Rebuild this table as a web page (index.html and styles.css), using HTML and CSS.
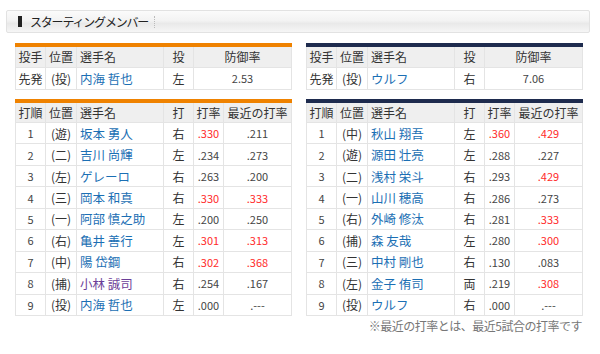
FILE: index.html
```html
<!DOCTYPE html>
<html lang="ja">
<head>
<meta charset="utf-8">
<link rel="stylesheet" href="styles.css">
</head>
<body>
<div class="page">
  <div class="title"><span class="title-mark"></span><span class="title-text">スターティングメンバー</span><span class="title-sep"></span></div>

  <div class="pair pitch">
    <table class="tbl home">
      <colgroup><col class="c1"><col class="c2"><col class="c3"><col class="c4"><col class="c5w"></colgroup>
      <tr class="head"><th>投手</th><th>位置</th><th class="l">選手名</th><th>投</th><th>防御率</th></tr>
      <tr><td>先発</td><td>(投)</td><td class="l"><span class="nm">内海 哲也</span></td><td>左</td><td class="n">2.53</td></tr>
    </table>
    <table class="tbl away">
      <colgroup><col class="c1"><col class="c2"><col class="c3"><col class="c4"><col class="c5w"></colgroup>
      <tr class="head"><th>投手</th><th>位置</th><th class="l">選手名</th><th>投</th><th>防御率</th></tr>
      <tr><td>先発</td><td>(投)</td><td class="l"><span class="nm">ウルフ</span></td><td>右</td><td class="n">7.06</td></tr>
    </table>
  </div>

  <div class="pair bat">
    <table class="tbl home">
      <colgroup><col class="c1"><col class="c2"><col class="c3"><col class="c4"><col class="c5"><col class="c6"></colgroup>
      <tr class="head"><th>打順</th><th>位置</th><th class="l">選手名</th><th>打</th><th>打率</th><th>最近の打率</th></tr>
      <tr><td class="n">1</td><td>(遊)</td><td class="l"><span class="nm">坂本 勇人</span></td><td>右</td><td class="n red">.330</td><td class="n">.211</td></tr>
      <tr><td class="n">2</td><td>(二)</td><td class="l"><span class="nm">吉川 尚輝</span></td><td>左</td><td class="n">.234</td><td class="n">.273</td></tr>
      <tr><td class="n">3</td><td>(左)</td><td class="l"><span class="nm">ゲレーロ</span></td><td>右</td><td class="n">.263</td><td class="n">.200</td></tr>
      <tr><td class="n">4</td><td>(三)</td><td class="l"><span class="nm">岡本 和真</span></td><td>右</td><td class="n red">.330</td><td class="n red">.333</td></tr>
      <tr><td class="n">5</td><td>(一)</td><td class="l"><span class="nm">阿部 慎之助</span></td><td>左</td><td class="n">.200</td><td class="n">.250</td></tr>
      <tr><td class="n">6</td><td>(右)</td><td class="l"><span class="nm">亀井 善行</span></td><td>左</td><td class="n red">.301</td><td class="n red">.313</td></tr>
      <tr><td class="n">7</td><td>(中)</td><td class="l"><span class="nm">陽 岱鋼</span></td><td>右</td><td class="n red">.302</td><td class="n red">.368</td></tr>
      <tr><td class="n">8</td><td>(捕)</td><td class="l"><span class="nm visited">小林 誠司</span></td><td>右</td><td class="n">.254</td><td class="n">.167</td></tr>
      <tr><td class="n">9</td><td>(投)</td><td class="l"><span class="nm">内海 哲也</span></td><td>左</td><td class="n">.000</td><td class="n">.---</td></tr>
    </table>
    <table class="tbl away">
      <colgroup><col class="c1"><col class="c2"><col class="c3"><col class="c4"><col class="c5"><col class="c6"></colgroup>
      <tr class="head"><th>打順</th><th>位置</th><th class="l">選手名</th><th>打</th><th>打率</th><th>最近の打率</th></tr>
      <tr><td class="n">1</td><td>(中)</td><td class="l"><span class="nm">秋山 翔吾</span></td><td>左</td><td class="n red">.360</td><td class="n red">.429</td></tr>
      <tr><td class="n">2</td><td>(遊)</td><td class="l"><span class="nm">源田 壮亮</span></td><td>左</td><td class="n">.288</td><td class="n">.227</td></tr>
      <tr><td class="n">3</td><td>(二)</td><td class="l"><span class="nm">浅村 栄斗</span></td><td>右</td><td class="n">.293</td><td class="n red">.429</td></tr>
      <tr><td class="n">4</td><td>(一)</td><td class="l"><span class="nm">山川 穂高</span></td><td>右</td><td class="n">.286</td><td class="n">.273</td></tr>
      <tr><td class="n">5</td><td>(右)</td><td class="l"><span class="nm">外崎 修汰</span></td><td>右</td><td class="n">.281</td><td class="n red">.333</td></tr>
      <tr><td class="n">6</td><td>(捕)</td><td class="l"><span class="nm">森 友哉</span></td><td>左</td><td class="n">.280</td><td class="n red">.300</td></tr>
      <tr><td class="n">7</td><td>(三)</td><td class="l"><span class="nm">中村 剛也</span></td><td>右</td><td class="n">.130</td><td class="n">.083</td></tr>
      <tr><td class="n">8</td><td>(左)</td><td class="l"><span class="nm">金子 侑司</span></td><td>両</td><td class="n">.219</td><td class="n red">.308</td></tr>
      <tr><td class="n">9</td><td>(投)</td><td class="l"><span class="nm">ウルフ</span></td><td>右</td><td class="n">.000</td><td class="n">.---</td></tr>
    </table>
  </div>

  <p class="note">※最近の打率とは、最近5試合の打率です</p>
</div>
</body>
</html>
```
FILE: styles.css
```css
* { box-sizing: border-box; }
body {
  margin: 0;
  background: #fff;
  font-family: "Noto Sans CJK JP", sans-serif;
  color: #333;
}
.page {
  width: 600px;
  height: 354px;
  padding: 10px 10px 0 6px;
}
.title {
  height: 23px;
  border: 1px solid #e2e2e2;
  border-radius: 2px;
  background: linear-gradient(#fbfbfb 0%, #f3f3f3 45%, #e9e9e9 60%, #f6f6f6 100%);
  display: flex;
  align-items: center;
  padding-left: 11px;
}
.title-mark {
  width: 4px;
  height: 11px;
  background: #222;
  margin-right: 8px;
}
.title-text {
  font-size: 12px;
  letter-spacing: -1.2px;
  color: #222;
}
.title-sep {
  width: 1px;
  height: 12px;
  margin-left: 6px;
  border-left: 1px dotted #bbb;
}
.pair {
  display: flex;
  gap: 14px;
  padding-left: 9px;
}
.pitch { margin-top: 10px; }
.bat { margin-top: 9px; }
.tbl {
  border-collapse: collapse;
  table-layout: fixed;
  font-size: 12px;
  border-top: 4px solid #ef8200;
}
.tbl.home { width: 276px; }
.tbl.away { width: 277px; border-top-color: #1e2b4e; }
.c1 { width: 30px; }
.c2 { width: 31px; }
.c3 { width: 87px; }
.c4 { width: 30px; }
.c5 { width: 30px; }
.c6 { width: 68px; }
.c5w { width: 98px; }
.tbl th, .tbl td {
  border: 1px solid #e4e4e4;
  text-align: center;
  padding: 0;
  white-space: nowrap;
  overflow: hidden;
}
.tbl th {
  background: #efefef;
  font-weight: normal;
  height: 22px;
  color: #333;
}
.pitch td { height: 22px; }
.bat td { height: 21.45px; }
.tbl .l { text-align: left; padding-left: 3px; }
.tbl .n { font-size: 11px; color: #444; }
.tbl .red { color: #ff2a2a; }
.nm { color: #1b6fb4; font-size: 12.5px; }
.nm.visited { color: #6b3e98; }
.note {
  margin: 1px 8px 0 0;
  text-align: right;
  font-size: 12px;
  color: #777;
  letter-spacing: -0.5px;
}
```
